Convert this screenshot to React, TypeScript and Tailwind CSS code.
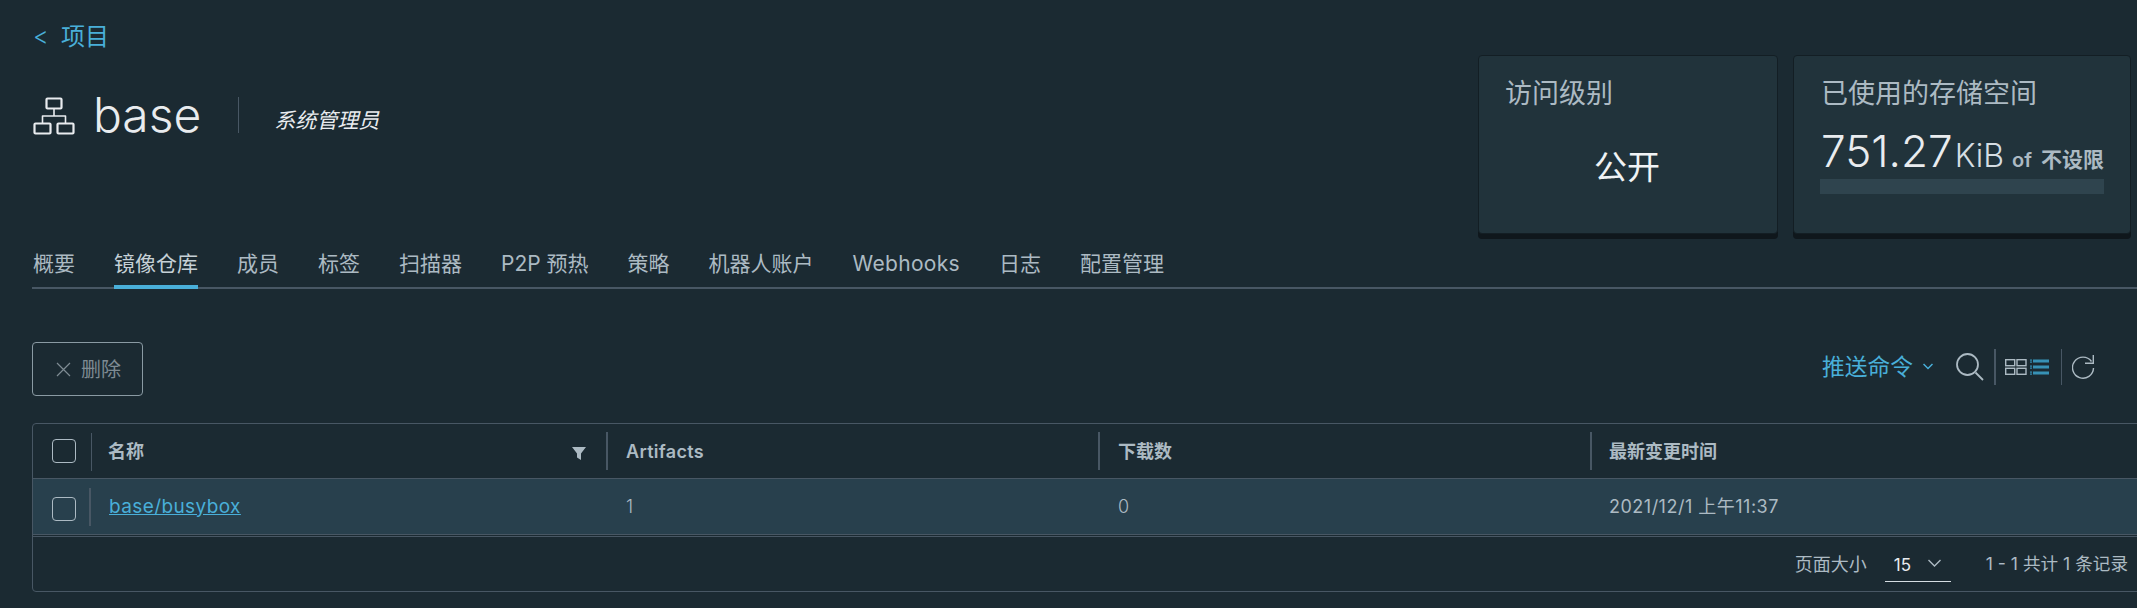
import React from "react";

const cjk = '"Inter","Noto Sans CJK SC",sans-serif';

function ProjectIcon() {
  return (
    <svg width="42" height="38" viewBox="0 0 42 38" fill="none" stroke="#e9ecef" strokeWidth="2.2" strokeLinejoin="round">
      <rect x="13.5" y="1.5" width="15" height="10" rx="1" />
      <rect x="1.5" y="26.5" width="16" height="10" rx="1" />
      <rect x="24.5" y="26.5" width="16" height="10" rx="1" />
      <path d="M21 11.5V19M9.5 26.5V19H32.5V26.5" strokeWidth="1.6" />
    </svg>
  );
}

function Checkbox() {
  return <span className="block w-[24px] h-[24px] rounded-[4px] border border-[#acbac3]" />;
}

const tabs = ["概要", "镜像仓库", "成员", "标签", "扫描器", "P2P 预热", "策略", "机器人账户", "Webhooks", "日志", "配置管理"];

export default function App() {
  return (
    <div className="w-[2137px] h-[608px] overflow-hidden bg-[#1b2a32] pl-[32px] text-[#acbac3]" style={{ fontFamily: cjk }}>
      <div className="flex justify-between h-[250px] pr-[6px]">
        <div className="flex flex-col pl-[1px]">
          <a className="flex items-center h-[30px] mt-[22px] text-[#49afd9] text-[24px]">
            <span className="w-[28px] text-[24px] font-light">&lt;</span>
            <span>项目</span>
          </a>
          <div className="flex items-start mt-[45px]">
            <ProjectIcon />
            <span className="ml-[18px] text-[48px] leading-[38px] font-light text-[#e9ecef] -mt-[1px]">base</span>
            <span className="ml-[37px] w-px h-[36px] bg-[#485764]" />
            <span className="ml-[35px] mt-[11px] text-[21px] leading-[26px] italic text-[#e9ecef]">系统管理员</span>
          </div>
        </div>
        <div className="flex gap-[15px] mt-[55px] h-[179px]">
          <div className="w-[300px] h-[179px] bg-[#21333b] rounded-[4px] border border-[#131e24] shadow-[0_5px_0_#0f171c] pl-[26px] pt-[21px]">
            <div className="text-[27px] leading-[34px] text-[#acbac3]">访问级别</div>
            <div className="mt-[36px] pl-[89px] text-[33px] leading-[40px] text-[#f0f3f5]">公开</div>
          </div>
          <div className="w-[338px] h-[179px] bg-[#21333b] rounded-[4px] border border-[#131e24] shadow-[0_5px_0_#0f171c] pl-[27px] pr-[26px] pt-[21px]">
            <div className="text-[27px] leading-[34px] text-[#acbac3] whitespace-nowrap">已使用的存储空间</div>
            <div className="flex items-baseline mt-[15px] h-[53px] whitespace-nowrap">
              <span className="text-[44px] leading-[50px] font-light text-[#e9ecef]">751.27</span>
              <span className="ml-[2px] text-[32px] font-light text-[#d5dde2]">KiB</span>
              <span className="ml-[8px] text-[20px] font-semibold text-[#acbac3]">of</span>
              <span className="ml-[9px] text-[21px] font-bold text-[#acbac3]">不设限</span>
            </div>
            <div className="h-[15px] bg-[#2f444e] -ml-[1px]" />
          </div>
        </div>
      </div>

      <div className="flex h-[39px] gap-[39px] border-b-2 border-[#485764] text-[21px] pl-[1px]">
        {tabs.map((t, i) => (
          <div key={t} className={"h-[39px] leading-[24px] pt-[2px] whitespace-nowrap " + (i === 1 ? "border-b-4 border-[#49afd9] text-[#c5d0d6]" : "text-[#acbac3]") + (i === 8 ? " tracking-[0.3px]" : "")}>
            {t}
          </div>
        ))}
      </div>

      <div className="flex justify-between items-center mt-[53px] h-[54px] pr-[42px]">
        <button className="flex items-center w-[111px] h-[54px] pl-[23px] rounded-[4px] border border-[#8a9aa3] text-[#7e8b93] text-[20px]">
          <svg width="15" height="15" viewBox="0 0 15 15" stroke="#7e8b93" strokeWidth="1.2"><path d="M1 1L14 14M14 1L1 14" /></svg>
          <span className="ml-[10px] mt-[2px]">删除</span>
        </button>
        <div className="flex items-center mb-[5px]">
          <span className="text-[#49afd9] text-[22.75px] whitespace-nowrap mt-[2px]">推送命令</span>
          <svg className="ml-[10px]" width="10" height="7" viewBox="0 0 10 7" fill="none" stroke="#49afd9" strokeWidth="1.5"><path d="M0.5 1L5 5.5L9.5 1" /></svg>
          <svg className="ml-[23px]" width="28" height="28" viewBox="0 0 28 28" fill="none" stroke="#acbac3"><circle cx="11.5" cy="11.5" r="10.5" strokeWidth="1.8" /><path d="M19.5 19.5L27 27" strokeWidth="1.8" /></svg>
          <span className="ml-[10px] w-[2px] h-[36px] bg-[#485764]" />
          <svg className="ml-[9px]" width="22" height="16" viewBox="0 0 22 16" fill="none" stroke="#acbac3" strokeWidth="1.4">
            <rect x="0.7" y="0.7" width="9" height="6" /><rect x="12" y="0.7" width="9" height="6" />
            <rect x="0.7" y="9.3" width="9" height="6" /><rect x="12" y="9.3" width="9" height="6" />
          </svg>
          <svg className="ml-[3px]" width="19" height="16" viewBox="0 0 19 16" fill="#3791b5">
            <rect x="3" y="0.5" width="16" height="3" /><rect x="3" y="6.5" width="16" height="3" /><rect x="3" y="12.5" width="16" height="3" />
            <rect x="0" y="0.5" width="2" height="1.2" /><rect x="0" y="2.5" width="2" height="1.2" /><rect x="0" y="6.5" width="2" height="1.2" /><rect x="0" y="8.5" width="2" height="1.2" /><rect x="0" y="12.5" width="2" height="1.2" /><rect x="0" y="14.5" width="2" height="1.2" />
          </svg>
          <span className="ml-[12px] w-px h-[36px] bg-[#485764]" />
          <svg className="ml-[10px]" width="23" height="25" viewBox="0 0 23 25" fill="none" stroke="#acbac3" strokeWidth="1.4"><path d="M19.5 7.5A10.5 10.5 0 1 0 21.5 14" /><path d="M21.3 1V9.3H13" /></svg>
        </div>
      </div>

      <div className="mt-[27px] w-[2200px] h-[169px] rounded-[4px] border border-[#485764] text-[18px]">
        <div className="flex h-[55px] border-b border-[#485764] text-[18px] font-bold">
          <div className="w-[59px] flex items-center justify-between pl-[19px]">
            <Checkbox />
            <span className="w-px h-[38px] bg-[#485764] mt-[1px]" />
          </div>
          <div className="w-[516px] flex items-center justify-between pl-[16px]">
            <span>名称</span>
            <div className="flex items-center">
              <svg width="14" height="13" viewBox="0 0 14 13" fill="#acbac3" className="mt-[4px]"><path d="M0 0H14L9 6.5V13L5 10.5V6.5Z" /></svg>
              <span className="ml-[20px] w-[2px] h-[38px] bg-[#485764]" />
            </div>
          </div>
          <div className="w-[492px] flex items-center justify-between pl-[18px]">
            <span className="font-semibold text-[18px] tracking-[0.3px]">Artifacts</span>
            <span className="w-[2px] h-[38px] bg-[#485764]" />
          </div>
          <div className="w-[492px] flex items-center justify-between pl-[18px]">
            <span>下载数</span>
            <span className="w-[2px] h-[38px] bg-[#485764]" />
          </div>
          <div className="flex items-center pl-[17px]">最新变更时间</div>
        </div>
        <div className="flex items-center h-[55px] bg-[#28404d]">
          <div className="w-[59px] flex items-center justify-between pl-[19px]">
            <span className="mt-[5px]"><Checkbox /></span>
            <span className="w-[2px] h-[38px] bg-[#485764] mr-[1px]" />
          </div>
          <div className="w-[516px] pl-[17px] pt-[1px]"><a className="text-[#49afd9] underline text-[19px] tracking-[0.4px]">base/busybox</a></div>
          <div className="w-[492px] pl-[18px] font-light">1</div>
          <div className="w-[492px] pl-[18px] font-light">0</div>
          <div className="pl-[17px] tracking-[0.5px]">2021/12/1 上午11:37</div>
        </div>
        <div className="h-[3px] border-y border-[#485764]" />
        <div className="w-[2095px] flex items-center justify-end h-[54px]">
          <span>页面大小</span>
          <div className="ml-[18px] w-[66px] h-[30px] mt-[6px] border-b border-[#d5dde2] flex items-center pl-[9px] text-[#e9ecef] text-[17px]">
            <span className="-mt-[2px]">15</span>
            <svg className="ml-[17px] -mt-[7px]" width="13" height="8" viewBox="0 0 13 8" fill="none" stroke="#acbac3" strokeWidth="1.4"><path d="M0.5 1L6.5 7L12.5 1" /></svg>
          </div>
          <span className="ml-[35px] text-[17.6px]">1 - 1 共计 1 条记录</span>
        </div>
      </div>
    </div>
  );
}
